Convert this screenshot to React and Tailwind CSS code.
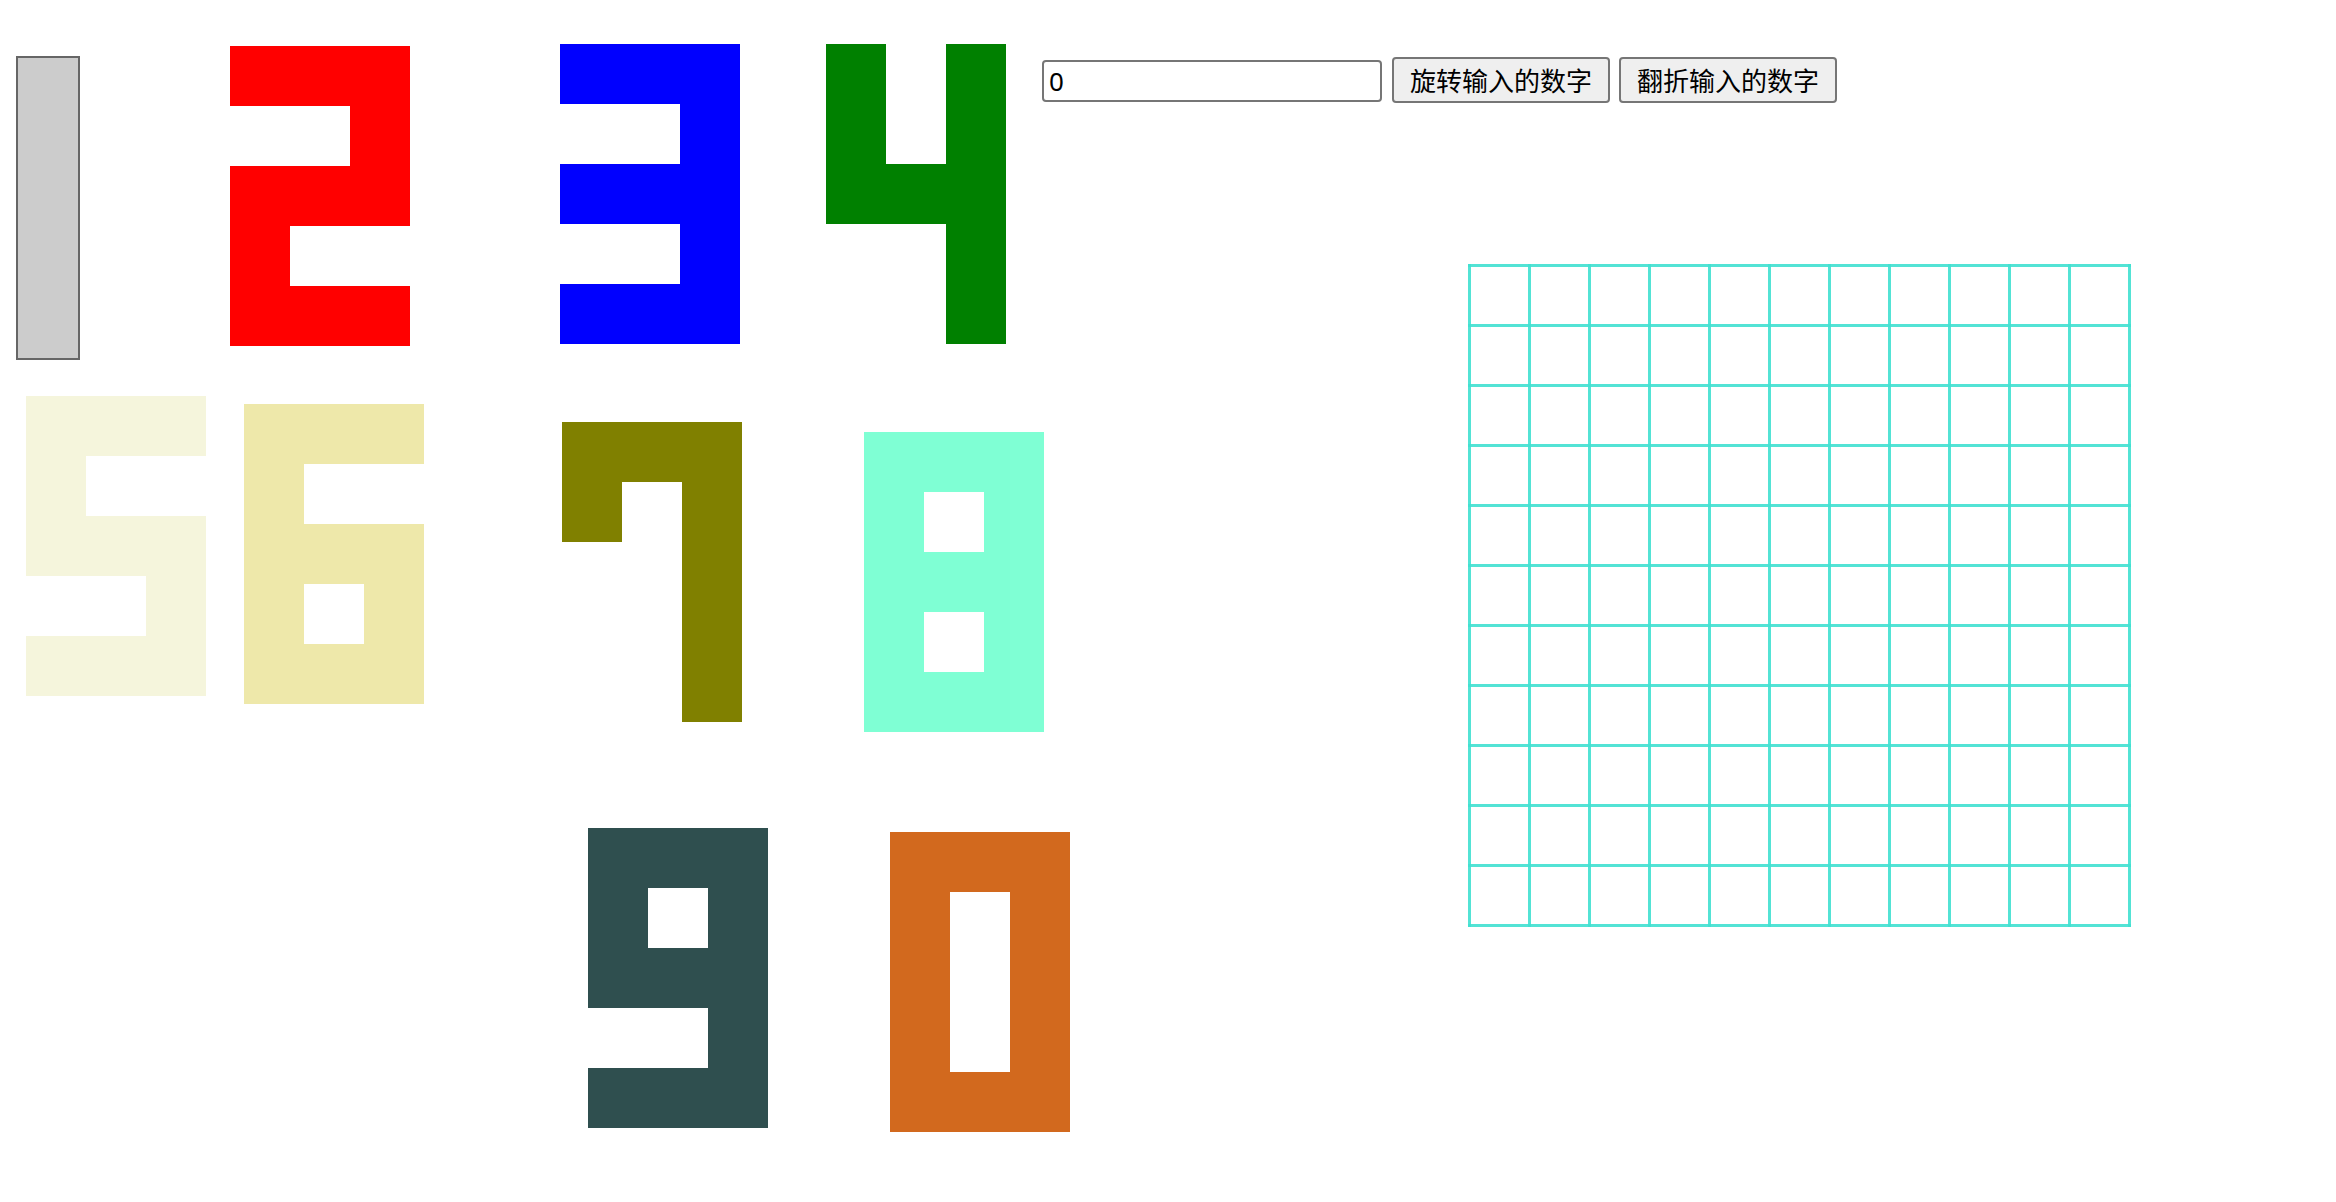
import React from "react";

const PATTERNS = {
  2: ["111", "001", "111", "100", "111"],
  3: ["111", "001", "111", "001", "111"],
  4: ["101", "101", "111", "001", "001"],
  5: ["111", "100", "111", "001", "111"],
  6: ["111", "100", "111", "101", "111"],
  7: ["111", "101", "001", "001", "001"],
  8: ["111", "101", "111", "101", "111"],
  9: ["111", "101", "111", "001", "111"],
  0: ["111", "101", "101", "101", "111"],
};

function Digit({ n, color, className }) {
  const cells = PATTERNS[n].join("").split("");
  return (
    <div className={"grid grid-cols-3 w-[180px] h-[300px] shrink-0 " + className}>
      {cells.map((c, i) => (
        <div key={i} className={"w-[60px] h-[60px] " + (c === "1" ? color : "")} />
      ))}
    </div>
  );
}

function Grid() {
  const lines = [];
  for (let i = 0; i <= 11; i++) {
    const p = 1.5 + i * 60;
    lines.push(<line key={"v" + i} x1={p} y1={1.5} x2={p} y2={661.5} />);
    lines.push(<line key={"h" + i} x1={1.5} y1={p} x2={661.5} y2={p} />);
  }
  return (
    <svg width="663" height="663" viewBox="0 0 663 663" className="block ml-[462px] mt-[161px]">
      <g stroke="#40e0d0" strokeOpacity="0.9" strokeWidth="3" strokeLinecap="square">{lines}</g>
    </svg>
  );
}

export default function App() {
  return (
    <div className="flex w-[2336px] h-[1202px] bg-white overflow-hidden" style={{ fontFamily: '"Noto Sans", "Noto Sans CJK SC", sans-serif' }}>
      <div className="w-[1006px] shrink-0 flex flex-col">
        <div className="flex items-start h-[360px]">
          <div className="ml-[16px] mt-[56px] w-[64px] h-[304px] border-2 border-[#666666] bg-[#cccccc] shrink-0" />
          <Digit n={2} color="bg-[#ff0000]" className="ml-[150px] mt-[46px]" />
          <Digit n={3} color="bg-[#0000ff]" className="ml-[150px] mt-[44px]" />
          <Digit n={4} color="bg-[#008000]" className="ml-[86px] mt-[44px]" />
        </div>
        <div className="flex items-start h-[380px]">
          <Digit n={5} color="bg-[#f5f5dc]" className="ml-[26px] mt-[36px]" />
          <Digit n={6} color="bg-[#eee8aa]" className="ml-[38px] mt-[44px]" />
          <Digit n={7} color="bg-[#808000]" className="ml-[138px] mt-[62px]" />
          <Digit n={8} color="bg-[#7fffd4]" className="ml-[122px] mt-[72px]" />
        </div>
        <div className="flex items-start">
          <Digit n={9} color="bg-[#2f4f4f]" className="ml-[588px] mt-[88px]" />
          <Digit n={0} color="bg-[#d2691e]" className="ml-[122px] mt-[92px]" />
        </div>
      </div>
      <div className="flex flex-col">
        <div className="flex items-start ml-[36px] mt-[57px]">
          <input
            defaultValue="0"
            className="mt-[3px] w-[340px] h-[42px] border-2 border-[#767676] rounded-[4px] pl-[5px] text-[26px] text-black outline-none bg-white"
            style={{ fontFamily: '"Noto Sans", sans-serif' }}
          />
          <button className="ml-[10px] w-[218px] h-[46px] bg-[#efefef] border-2 border-[#767676] rounded-[4px] text-[26px] leading-none text-black flex items-center justify-center" style={{ fontFamily: '"Noto Sans CJK SC", sans-serif' }}>
            旋转输入的数字
          </button>
          <button className="ml-[9px] w-[218px] h-[46px] bg-[#efefef] border-2 border-[#767676] rounded-[4px] text-[26px] leading-none text-black flex items-center justify-center" style={{ fontFamily: '"Noto Sans CJK SC", sans-serif' }}>
            翻折输入的数字
          </button>
        </div>
        <Grid />
      </div>
    </div>
  );
}
